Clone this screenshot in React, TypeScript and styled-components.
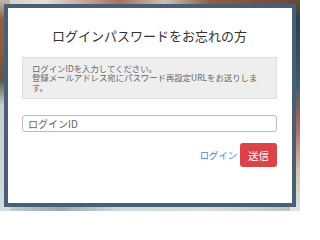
import styled, { createGlobalStyle } from 'styled-components'

const GlobalStyle = createGlobalStyle`
  html, body {
    margin: 0;
    padding: 0;
    width: 300px;
    height: 211px;
    overflow: hidden;
  }
  body {
    font-family: "Noto Sans CJK JP", "Noto Sans", sans-serif;
  }
`

// ぼかした写真の背景（ダイアログの外側にだけ少し見える）
const Backdrop = styled.div`
  width: 300px;
  height: 211px;
  box-sizing: border-box;
  padding: 4px;
  background:
    linear-gradient(180deg, #bdb8b3 0%, #90603f 9%, #8a5a3e 26%, #5b5945 38%, #c4cfd2 50%, #d3dcde 100%) left / 10px 100% no-repeat,
    linear-gradient(180deg, #6c4b3a 0%, #2a414c 9%, #3f5c68 40%, #ad6a5e 60%, #cfc3a8 80%, #dfe5e5 100%) right / 10px 100% no-repeat,
    linear-gradient(90deg, #d2cec9 0%, #e2dfdb 15%, #a7715f 40%, #cbbfb4 55%, #8d5d44 70%, #6f4a38 100%) top / 100% 10px no-repeat,
    linear-gradient(90deg, #c8d4d8 0%, #9aa8ae 20%, #cfdadc 40%, #d8dede 70%, #b8c0c0 100%) bottom / 100% 10px no-repeat,
    #c8c8c4;
`

const Dialog = styled.div`
  width: 292px;
  height: 203px;
  box-sizing: border-box;
  border: 4px solid #4a5e76;
  background: #fff;
  padding: 20px 15px 0 14px;
  display: flex;
  flex-direction: column;
`

const Title = styled.h2`
  margin: 0;
  font-size: 13px;
  line-height: 16px;
  font-weight: 400;
  color: #333;
  text-align: center;
`

const Notice = styled.div`
  margin-top: 13px;
  background: #eeeeee;
  border: 1px solid #dedede;
  padding: 6px 14px 6px 9px;
  font-size: 8.4px;
  line-height: 9.4px;
  color: #666;
`

const IdInput = styled.input`
  margin-top: 16px;
  height: 17px;
  box-sizing: border-box;
  border: 1px solid #bbb;
  border-radius: 3px;
  padding: 0 5px;
  font-family: inherit;
  font-size: 10px;
  color: #333;
  outline: none;
  &::placeholder {
    color: #666;
  }
`

const Actions = styled.div`
  margin-top: 11px;
  display: flex;
  justify-content: flex-end;
  align-items: center;
  gap: 3px;
`

const LoginLink = styled.a`
  font-size: 9.3px;
  color: #3f87c9;
  text-decoration: none;
  cursor: pointer;
`

const SendButton = styled.button`
  width: 37px;
  height: 24px;
  border: none;
  border-radius: 3px;
  background: #dc4349;
  color: #fff;
  font-family: inherit;
  font-size: 10.5px;
  padding: 0;
  cursor: pointer;
`

export default function App() {
  return (
    <>
      <GlobalStyle />
      <Backdrop>
        <Dialog>
          <Title>ログインパスワードをお忘れの方</Title>
          <Notice>
            ログインIDを入力してください。
            <br />
            登録メールアドレス宛にパスワード再設定URLをお送りします。
          </Notice>
          <IdInput placeholder="ログインID" />
          <Actions>
            <LoginLink>ログイン</LoginLink>
            <SendButton>送信</SendButton>
          </Actions>
        </Dialog>
      </Backdrop>
    </>
  )
}
